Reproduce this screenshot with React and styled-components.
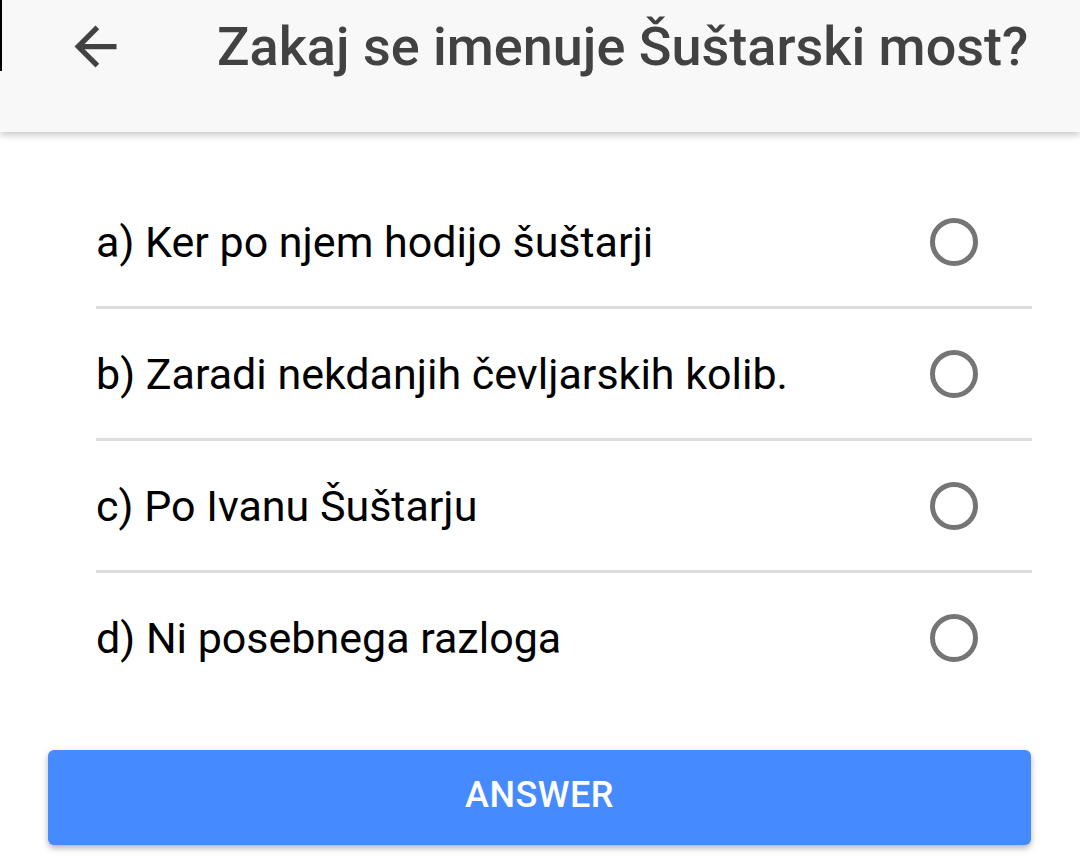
import React from "react";
import styled, { createGlobalStyle } from "styled-components";

const GlobalStyle = createGlobalStyle`
  html, body {
    margin: 0;
    padding: 0;
    background: #ffffff;
    font-family: Roboto, "Noto Sans", "Liberation Sans", sans-serif;
  }
`;

const Page = styled.div`
  width: 1080px;
  min-height: 868px;
  background: #ffffff;
`;

const Header = styled.header`
  position: relative;
  height: 132px;
  box-sizing: border-box;
  background: #f8f8f8;
  box-shadow: 0 3px 7px rgba(0, 0, 0, 0.22);
  display: flex;
  align-items: flex-start;
  padding: 15px 0 0 64px;
  gap: 90px;

  &::before {
    content: "";
    position: absolute;
    left: 0;
    top: 0;
    width: 2px;
    height: 71px;
    background: #000;
  }
`;

const BackButton = styled.button`
  border: 0;
  padding: 0;
  margin: 0;
  background: none;
  width: 63px;
  height: 63px;
  display: flex;
  color: #424242;
  cursor: pointer;
`;

const Title = styled.h1`
  margin: 0;
  font-size: 54px;
  line-height: 63px;
  font-weight: 500;
  color: #424242;
  white-space: nowrap;
`;

const Content = styled.main`
  padding: 45px 48px 0 48px;
`;

const OptionList = styled.div`
  display: flex;
  flex-direction: column;
  margin-left: 48px;
`;

const OptionRow = styled.label`
  display: flex;
  align-items: center;
  justify-content: space-between;
  height: ${(p) => (p.$last ? "129px" : "132px")};
  box-sizing: border-box;
  padding-right: 54px;
  border-bottom: ${(p) => (p.$last ? "none" : "3px solid #dddddd")};
  cursor: pointer;
`;

const OptionText = styled.span`
  font-size: 43px;
  color: #000000;
`;

const Radio = styled.span`
  width: 48px;
  height: 48px;
  box-sizing: border-box;
  border: 5px solid #757575;
  border-radius: 50%;
`;

const AnswerButton = styled.button`
  display: block;
  width: 983px;
  height: 95px;
  margin-top: 48px;
  padding: 0 0 6px;
  border: 0;
  border-radius: 6px;
  background: #468aff;
  box-shadow: 0 3px 6px rgba(0, 0, 0, 0.3);
  color: #ffffff;
  font-family: Roboto, "Noto Sans", "Liberation Sans", sans-serif;
  font-size: 36px;
  font-weight: 500;
  letter-spacing: 0.5px;
  cursor: pointer;
`;

const options = [
  "a) Ker po njem hodijo šuštarji",
  "b) Zaradi nekdanjih čevljarskih kolib.",
  "c) Po Ivanu Šuštarju",
  "d) Ni posebnega razloga",
];

function ArrowBack() {
  return (
    <svg width="63" height="63" viewBox="0 0 24 24" fill="currentColor">
      <path d="M20 11H7.83l5.59-5.59L12 4l-8 8 8 8 1.41-1.41L7.83 13H20v-2z" />
    </svg>
  );
}

export default function App() {
  return (
    <Page>
      <GlobalStyle />
      <Header>
        <BackButton aria-label="Back">
          <ArrowBack />
        </BackButton>
        <Title>Zakaj se imenuje Šuštarski most?</Title>
      </Header>
      <Content>
        <OptionList>
          {options.map((text, i) => {
            const last = i === options.length - 1;
            return (
              <OptionRow key={text} $last={last}>
                <OptionText>{text}</OptionText>
                <Radio />
              </OptionRow>
            );
          })}
        </OptionList>
        <AnswerButton>ANSWER</AnswerButton>
      </Content>
    </Page>
  );
}
